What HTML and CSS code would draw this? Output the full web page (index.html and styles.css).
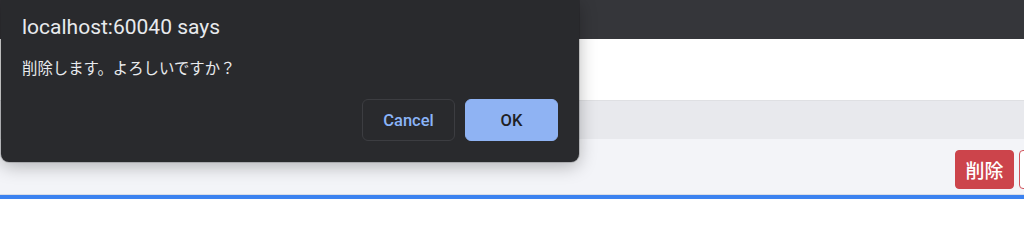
FILE: index.html
```html
<!DOCTYPE html>
<html lang="ja">
<head>
<meta charset="utf-8">
<link rel="stylesheet" href="styles.css">
</head>
<body>
<div class="app">
  <div class="toolbar"></div>
  <div class="page"></div>
  <div class="band"></div>
  <div class="actions">
    <button class="btn btn-danger">削除</button>
    <button class="btn btn-outline" aria-label="編集"></button>
  </div>
  <div class="rest"></div>
</div>
<div class="dialog">
  <div class="dialog-title">localhost:60040 says</div>
  <div class="dialog-message">削除します。よろしいですか？</div>
  <div class="dialog-buttons">
    <button class="dbtn dbtn-cancel">Cancel</button>
    <button class="dbtn dbtn-ok">OK</button>
  </div>
</div>
</body>
</html>
```
FILE: styles.css
```css
html, body {
  margin: 0;
  padding: 0;
}
body {
  width: 1024px;
  height: 240px;
  overflow: hidden;
  background: #ffffff;
  font-family: Roboto, "Liberation Sans", "Noto Sans CJK JP", sans-serif;
  position: relative;
}
.app {
  display: flex;
  flex-direction: column;
  height: 240px;
  width: 1024px;
}
.toolbar {
  height: 39px;
  background: #35363a;
}
.page {
  height: 61px;
  background: #ffffff;
  border-bottom: 1px solid #dfe0e3;
}
.band {
  height: 38px;
  background: #e8e9ed;
}
.actions {
  background: #f3f4f8;
  border-bottom: 4px solid #3b82f0;
  box-shadow: inset 0 -1px 0 #d9dde6;
  display: flex;
  align-items: flex-start;
  justify-content: flex-end;
  gap: 5px;
  padding-top: 11px;
  box-sizing: border-box;
  height: 60px;
  overflow: hidden;
}
.btn {
  height: 39px;
  border-radius: 4px;
  font-family: "Noto Sans CJK JP", sans-serif;
  font-size: 19px;
  font-weight: 500;
  padding: 0;
  line-height: 37px;
  flex: none;
}
.btn-danger {
  width: 59px;
  background: #cc444b;
  border: 1px solid #cc444b;
  color: #ffffff;
}
.btn-outline {
  width: 59px;
  margin-right: -54px;
  background: #ffffff;
  border: 1px solid #d0525a;
  color: #cc444b;
}
.rest {
  flex: 1;
  background: #ffffff;
}
.dialog {
  position: absolute;
  top: 0;
  left: 1px;
  width: 578px;
  height: 162px;
  box-sizing: border-box;
  background: #292a2d;
  border-radius: 0 0 8px 8px;
  box-shadow: 0 4px 18px rgba(0, 0, 0, 0.28), 0 0 0 1px rgba(0, 0, 0, 0.15);
  padding: 15px 21px 21px 21px;
  display: flex;
  flex-direction: column;
}
.dialog-title {
  color: #e8eaed;
  font-size: 21px;
  line-height: 25px;
  font-family: Roboto, "Liberation Sans", sans-serif;
}
.dialog-message {
  color: #e8eaed;
  font-size: 15.4px;
  line-height: 20px;
  margin-top: 17px;
  font-family: "Noto Sans CJK JP", sans-serif;
}
.dialog-buttons {
  margin-top: auto;
  display: flex;
  justify-content: flex-end;
  gap: 10px;
}
.dbtn {
  width: 93px;
  height: 42px;
  border-radius: 6px;
  font-family: Roboto, "Liberation Sans", sans-serif;
  font-size: 16.5px;
  font-weight: 500;
}
.dbtn-cancel {
  background: #292a2d;
  border: 1px solid #3c3d41;
  color: #8ab4f8;
}
.dbtn-ok {
  background: #8fb3f3;
  border: 1px solid #8fb3f3;
  color: #202124;
}
```
